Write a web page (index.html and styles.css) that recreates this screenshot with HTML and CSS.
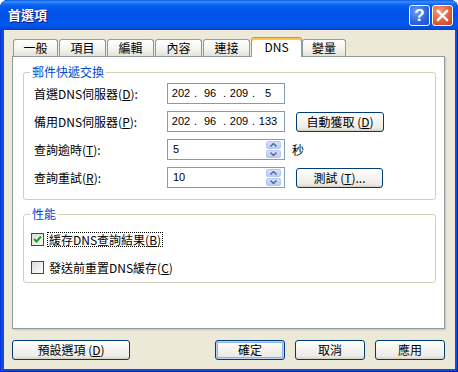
FILE: index.html
```html
<!DOCTYPE html>
<html lang="zh-Hant">
<head>
    <meta charset="UTF-8">
    <title>首選項</title>
    <link rel="stylesheet" href="styles.css">
</head>
<body>
    <div class="window">
        <div class="titlebar">
            <span class="title">首選項</span>
            <div class="caption-buttons">
                <button class="cap help">?</button>
                <button class="cap close">
                    <svg width="13" height="13" viewBox="0 0 13 13">
                        <path d="M2 2 L11 11 M11 2 L2 11" stroke="#fff" stroke-width="2.4" stroke-linecap="square"/>
                    </svg>
                </button>
            </div>
        </div>

        <div class="client">
            <div class="tabs">
                <div class="tab w45">一般</div>
                <div class="tab w47">項目</div>
                <div class="tab w47">編輯</div>
                <div class="tab w47">內容</div>
                <div class="tab w47">連接</div>
                <div class="tab active">DNS</div>
                <div class="tab w44">變量</div>
            </div>

            <div class="panel">
                <fieldset class="group">
                    <legend>郵件快遞交換</legend>
                    <div class="row">
                        <label>首選DNS伺服器(<u>D</u>):</label>
                        <div class="field ip">
                            <span class="octet">202</span><span class="dot">.</span>
                            <span class="octet">96</span><span class="dot">.</span>
                            <span class="octet">209</span><span class="dot">.</span>
                            <span class="octet">5</span>
                        </div>
                    </div>
                    <div class="row">
                        <label>備用DNS伺服器(<u>P</u>):</label>
                        <div class="field ip">
                            <span class="octet">202</span><span class="dot">.</span>
                            <span class="octet">96</span><span class="dot">.</span>
                            <span class="octet">209</span><span class="dot">.</span>
                            <span class="octet">133</span>
                        </div>
                        <button class="btn">自動獲取 (<u>D</u>)</button>
                    </div>
                    <div class="row">
                        <label>查詢逾時(<u>T</u>):</label>
                        <div class="field">
                            <span>5</span>
                            <div class="spin">
                                <span class="spin-half">
                                    <svg width="7" height="4" viewBox="0 0 7 4"><path d="M0.5 3.5 L3.5 0.5 L6.5 3.5" fill="none" stroke="#4D6185" stroke-width="1.3"/></svg>
                                </span>
                                <span class="spin-half">
                                    <svg width="7" height="4" viewBox="0 0 7 4"><path d="M0.5 0.5 L3.5 3.5 L6.5 0.5" fill="none" stroke="#4D6185" stroke-width="1.3"/></svg>
                                </span>
                            </div>
                        </div>
                        <span class="unit">秒</span>
                    </div>
                    <div class="row">
                        <label>查詢重試(<u>R</u>):</label>
                        <div class="field">
                            <span>10</span>
                            <div class="spin">
                                <span class="spin-half">
                                    <svg width="7" height="4" viewBox="0 0 7 4"><path d="M0.5 3.5 L3.5 0.5 L6.5 3.5" fill="none" stroke="#4D6185" stroke-width="1.3"/></svg>
                                </span>
                                <span class="spin-half">
                                    <svg width="7" height="4" viewBox="0 0 7 4"><path d="M0.5 0.5 L3.5 3.5 L6.5 0.5" fill="none" stroke="#4D6185" stroke-width="1.3"/></svg>
                                </span>
                            </div>
                        </div>
                        <button class="btn test">測試 (<u>T</u>)...</button>
                    </div>
                </fieldset>

                <fieldset class="group perf">
                    <legend>性能</legend>
                    <div class="check-row">
                        <span class="box">
                            <svg width="11" height="11" viewBox="0 0 11 11"><path d="M2 5 L4.5 7.5 L9 2.5" fill="none" stroke="#21A121" stroke-width="2"/></svg>
                        </span>
                        <span class="check-label focus">緩存DNS查詢結果(<u>B</u>)</span>
                    </div>
                    <div class="check-row">
                        <span class="box"></span>
                        <span class="check-label">發送前重置DNS緩存(<u>C</u>)</span>
                    </div>
                </fieldset>
            </div>

            <div class="actions">
                <button class="btn wide">預設選項 (<u>D</u>)</button>
                <button class="btn default">確定</button>
                <button class="btn">取消</button>
                <button class="btn">應用</button>
            </div>
        </div>
    </div>
</body>
</html>
```

FILE: styles.css
```css
body {
    margin: 0;
    font: 12px/14px "Noto Sans CJK TC", sans-serif;
    color: #000;
}
.window {
    width: 458px;
    height: 372px;
    display: flex;
    flex-direction: column;
    background: #0A4FDB;
    border-radius: 8px 8px 0 0;
    box-shadow: inset 1px 0 #0831D9, inset -1px 0 #001EA0, inset 0 -1px #001EA0;
    overflow: hidden;
}
.titlebar {
    height: 30px;
    flex: none;
    display: flex;
    align-items: center;
    padding: 0 5px 0 8px;
    background: linear-gradient(#0A5BEA 0, #3D8FF8 2px, #1469F3 4px, #0058EE 8px, #0052E6 50%, #0059EE 82%, #0044D2 100%);
}
.title {
    flex: 1;
    color: #fff;
    font-weight: bold;
    font-size: 13px;
    text-shadow: 1px 1px #0F1089;
}
.caption-buttons {
    display: flex;
    gap: 2px;
    margin-top: 1px;
}
.cap {
    width: 21px;
    height: 21px;
    box-sizing: border-box;
    border: 1px solid #fff;
    border-radius: 3px;
    padding: 0;
    display: flex;
    align-items: center;
    justify-content: center;
}
.help {
    background: radial-gradient(circle at 35% 30%, #6C9CF8, #2B63E0 60%, #1D4CC6);
    color: #fff;
    font: bold 17px/17px "Liberation Sans", sans-serif;
}
.close {
    background: radial-gradient(circle at 35% 30%, #F3A183, #E05A31 60%, #C54520);
}
.client {
    flex: 1;
    margin: 0 3px 3px 4px;
    background: #ECE9D8;
    padding: 7px 10px 0 8px;
    display: flex;
    flex-direction: column;
}
.tabs {
    display: flex;
    align-items: flex-end;
    height: 19px;
    padding-left: 1px;
}
.tab {
    height: 17px;
    box-sizing: border-box;
    border: 1px solid #919B9C;
    border-bottom: none;
    border-radius: 3px 3px 0 0;
    background: linear-gradient(#fff, #F5F4F0 55%, #E3E1D7);
    text-align: center;
    line-height: 16px;
    margin-right: 1px;
}
.w44 { width: 44px; }
.w45 { width: 45px; }
.w47 { width: 47px; }
.tab.active {
    width: 51px;
    height: 20px;
    margin: 0 0 -1px;
    background: #fff;
    border-top: 1px solid #E68B2C;
    box-shadow: inset 0 2px #FFC83C;
    line-height: 17px;
    position: relative;
    z-index: 1;
}
.panel {
    height: 273px;
    box-sizing: border-box;
    border: 1px solid #919B9C;
    background: #fff;
    padding: 8px 8px 0 10px;
    box-shadow: 1px 1px 0 #D0CDBE, 2px 2px 0 #E0DDD0;
}
.group {
    margin: 0;
    border: 1px solid #D0D0BF;
    border-radius: 3px;
    padding: 4px 10px 11px;
    min-width: 0;
}
.group legend {
    padding: 0 2px;
    margin-left: -4px;
    color: #0046D5;
    line-height: 14px;
}
.row {
    display: flex;
    align-items: center;
    height: 21px;
    margin-bottom: 7px;
}
.row:last-child {
    margin-bottom: 0;
}
.row label {
    width: 133px;
    flex: none;
}
.field {
    width: 118px;
    height: 21px;
    box-sizing: border-box;
    border: 1px solid #7F9DB9;
    background: #fff;
    display: flex;
    align-items: center;
    padding-left: 5px;
    font: 11px/13px "Liberation Sans", sans-serif;
}
.field.ip {
    padding-left: 1px;
}
.octet {
    width: 24px;
    text-align: center;
}
.dot {
    width: 5px;
    text-align: center;
}
.spin {
    margin-left: auto;
    margin-right: 3px;
    width: 15px;
    height: 17px;
    display: flex;
    flex-direction: column;
    gap: 1px;
}
.spin-half {
    flex: 1;
    display: flex;
    align-items: center;
    justify-content: center;
    border-radius: 2px;
    background: linear-gradient(#D3E0FC, #B7CBF7);
    border: 1px solid #B4C8F6;
    box-sizing: border-box;
}
.unit {
    margin-left: 7px;
}
.btn {
    height: 20px;
    box-sizing: border-box;
    border: 1px solid #003C74;
    border-radius: 3px;
    background: linear-gradient(#fff, #F4F3EE 50%, #ECEBE6 85%, #D6D0C5);
    font: inherit;
    line-height: 14px;
    padding: 0;
    margin-left: 11px;
    width: 88px;
    color: #000;
}
.btn.test {
    width: 87px;
}
.check-row {
    display: flex;
    align-items: center;
    height: 15px;
}
.perf {
    margin-top: 7px;
    padding-top: 11px;
    padding-bottom: 7px;
}
.check-row + .check-row {
    margin-top: 13px;
}
.box {
    width: 13px;
    height: 13px;
    box-sizing: border-box;
    border: 1px solid #1C5180;
    background: linear-gradient(135deg, #DCDCD7, #fff);
    margin-left: -3px;
    display: flex;
    align-items: center;
    justify-content: center;
}
.check-label {
    margin-left: 3px;
    padding: 0 1px;
    height: 15px;
    box-sizing: border-box;
    line-height: 13px;
    border: 1px solid transparent;
}
.check-label.focus {
    border: 1px dotted #000;
}
.actions {
    display: flex;
    margin-top: 11px;
    gap: 10px;
}
.actions .btn {
    margin-left: 0;
    width: 70px;
}
.actions .btn.wide {
    width: 118px;
    margin-right: auto;
}
.btn.default {
    box-shadow: inset 0 0 0 1px #BCD4F6, inset 0 0 0 2px #8CB0EC;
}
```
